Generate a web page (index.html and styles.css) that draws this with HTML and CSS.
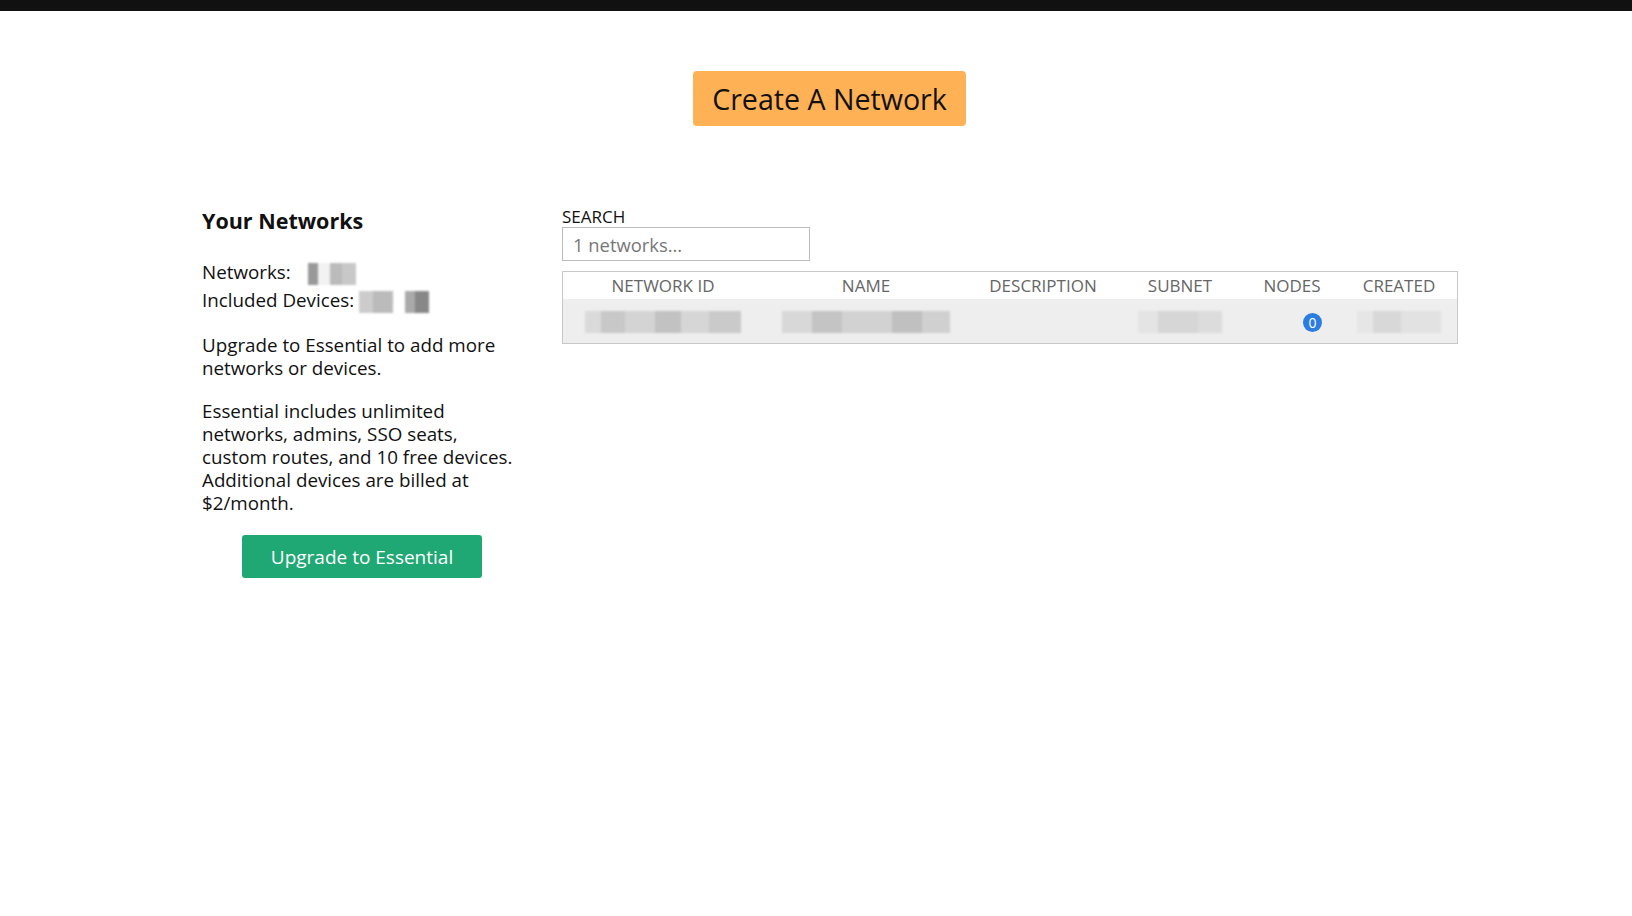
FILE: index.html
```html
<!DOCTYPE html>
<html lang="en">
<head>
    <meta charset="UTF-8">
    <title>Networks</title>
    <link rel="stylesheet" href="styles.css">
</head>
<body>
    <div class="topbar"></div>

    <div class="create-wrap">
        <button class="btn-create">Create A Network</button>
    </div>

    <div class="page">
        <div class="sidebar">
            <h2>Your Networks</h2>
            <div class="counts">
                <div>Networks: <span class="blur blur-a"></span></div>
                <div>Included Devices: <span class="blur blur-b"></span></div>
            </div>
            <p>Upgrade to Essential to add more networks or devices.</p>
            <p>Essential includes unlimited networks, admins, SSO seats, custom routes, and 10 free devices. Additional devices are billed at $2/month.</p>
            <div class="upgrade-wrap">
                <button class="btn-upgrade">Upgrade to Essential</button>
            </div>
        </div>

        <div class="main">
            <label class="search-label" for="search">SEARCH</label>
            <input class="search" id="search" type="text" placeholder="1 networks...">

            <table class="networks">
                <thead>
                    <tr>
                        <th class="c-id">NETWORK ID</th>
                        <th class="c-name">NAME</th>
                        <th class="c-desc">DESCRIPTION</th>
                        <th class="c-subnet">SUBNET</th>
                        <th class="c-nodes">NODES</th>
                        <th class="c-created">CREATED</th>
                    </tr>
                </thead>
                <tbody>
                    <tr>
                        <td><span class="blur blur-id"></span></td>
                        <td><span class="blur blur-name"></span></td>
                        <td></td>
                        <td><span class="blur blur-subnet"></span></td>
                        <td class="nodes"><span class="badge">0</span></td>
                        <td><span class="blur blur-created"></span></td>
                    </tr>
                </tbody>
            </table>
        </div>
    </div>
</body>
</html>
```

FILE: styles.css
```css
body {
    margin: 0;
    font-family: "Open Sans", "Noto Sans", sans-serif;
    color: #111;
    background: #fff;
}
.topbar {
    height: 11px;
    background: #111;
}
.create-wrap {
    padding-top: 60px;
    padding-left: 693px;
}
.btn-create {
    background: #ffb255;
    color: #111;
    border: none;
    border-radius: 4px;
    width: 273px;
    height: 55px;
    font-family: inherit;
    font-size: 28.6px;
    padding: 0;
    cursor: pointer;
}
.page {
    display: flex;
    gap: 40px;
    margin-left: 202px;
    margin-top: 80px;
    width: 1255px;
}
.sidebar {
    width: 320px;
    flex: none;
    font-size: 18.8px;
    line-height: 23px;
}
.sidebar h2 {
    font-size: 21.5px;
    font-weight: 700;
    margin: 2px 0 24px;
    line-height: 26px;
}
.counts {
    line-height: 28px;
    margin-bottom: 20px;
}
.sidebar p {
    margin: 0 0 20px;
    width: 318px;
}
.upgrade-wrap {
    text-align: center;
    padding-top: 0;
}
.btn-upgrade {
    background: #1fa874;
    color: #fff;
    border: none;
    border-radius: 3px;
    width: 240px;
    height: 43px;
    font-family: inherit;
    font-size: 19px;
    cursor: pointer;
}
.main {
    flex: 1;
}
.search-label {
    display: block;
    font-size: 17px;
    line-height: 18px;
    margin-top: 2px;
}
.search {
    display: block;
    box-sizing: border-box;
    width: 248px;
    height: 34px;
    border: 1px solid #bbb;
    padding: 0 10px;
    font-family: inherit;
    font-size: 18.4px;
    color: #777;
    margin-top: 1px;
    margin-bottom: 10px;
}
.search::placeholder {
    color: #777;
}
.networks {
    width: 896px;
    border-collapse: collapse;
    border: 1px solid #c8c8c8;
    table-layout: fixed;
}
.networks th {
    font-weight: 400;
    font-size: 17px;
    color: #666;
    height: 27px;
    padding: 0;
    text-align: center;
}
.networks td {
    background: #eeeeee;
    height: 44px;
    padding: 0;
    text-align: center;
}
.c-id { width: 200px; }
.c-name { width: 206px; }
.c-desc { width: 148px; }
.c-subnet { width: 126px; }
.c-nodes { width: 98px; }
.networks td.nodes {
    text-align: right;
    padding-right: 19px;
}
.badge {
    display: inline-block;
    width: 19px;
    height: 19px;
    border-radius: 50%;
    background: #2b7de0;
    color: #fff;
    font-size: 14px;
    line-height: 19px;
    text-align: center;
    vertical-align: middle;
}
.blur {
    display: inline-block;
    vertical-align: middle;
    filter: blur(1px);
}
.blur-a {
    width: 60px;
    height: 22px;
    background:
        linear-gradient(90deg, #fff 0 12px, #999 12px 22px, #f2f2f2 22px 34px, #bbb 34px 46px, #c8c8c8 46px 60px);
}
.blur-b {
    width: 70px;
    height: 22px;
    background:
        linear-gradient(90deg, #ccc 0 14px, #bbb 14px 34px, #fff 34px 46px, #aaa 46px 56px, #888 56px 70px);
}
.blur-id {
    width: 156px;
    height: 22px;
    background:
        linear-gradient(90deg, #dadada 0 16px, #c8c8c8 16px 40px, #d4d4d4 40px 70px, #c2c2c2 70px 96px, #d6d6d6 96px 124px, #cacaca 124px 156px);
}
.blur-name {
    width: 168px;
    height: 22px;
    background:
        linear-gradient(90deg, #d8d8d8 0 30px, #c4c4c4 30px 60px, #d2d2d2 60px 110px, #c0c0c0 110px 140px, #d0d0d0 140px 168px);
}
.blur-subnet {
    width: 84px;
    height: 22px;
    background:
        linear-gradient(90deg, #e4e4e4 0 20px, #d6d6d6 20px 60px, #dcdcdc 60px 84px);
}
.blur-created {
    width: 84px;
    height: 22px;
    background:
        linear-gradient(90deg, #e6e6e6 0 16px, #d8d8d8 16px 44px, #e2e2e2 44px 84px);
}
```
